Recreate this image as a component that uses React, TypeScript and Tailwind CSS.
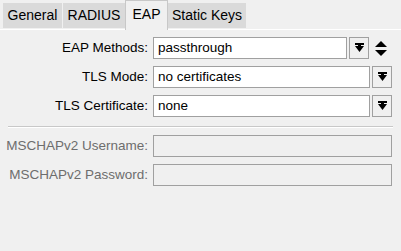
function DropIcon() {
  return (
    <svg width="9" height="10" viewBox="0 0 9 10" aria-hidden>
      <rect x="0" y="0" width="9" height="2" fill="#000" />
      <path d="M0 3 H9 L4.5 9 Z" fill="#000" />
      <rect x="3" y="2" width="3" height="3" fill="#000" />
    </svg>
  );
}

function UpDownIcon() {
  return (
    <svg width="12" height="15" viewBox="0 0 12 15" aria-hidden>
      <path d="M6 0 L12 6 H0 Z" fill="#000" />
      <path d="M0 9 H12 L6 15 Z" fill="#000" />
    </svg>
  );
}

function DropButton() {
  return (
    <div className="w-[20px] h-[22px] shrink-0 border border-[#a0a0a0] bg-[#f0f0f0] flex items-center justify-center">
      <DropIcon />
    </div>
  );
}

function Row({ label, value, extra }: { label: string; value: string; extra?: boolean }) {
  return (
    <div className="flex items-center h-[22px]">
      <div className="w-[148px] shrink-0 text-right pr-[5px] text-[13.5px] text-black">{label}</div>
      <div className="flex-1 h-[22px] bg-white border border-[#a0a0a0] flex items-center px-[4px] text-[13.5px] text-black">
        {value}
      </div>
      <div className="ml-[2px]">
        <DropButton />
      </div>
      {extra && (
        <div className="w-[23px] shrink-0 flex items-center justify-center">
          <UpDownIcon />
        </div>
      )}
    </div>
  );
}

function GreyRow({ label }: { label: string }) {
  return (
    <div className="flex items-center h-[22px]">
      <div className="w-[148px] shrink-0 text-right pr-[5px] text-[13.5px] text-[#6d6d6d]">{label}</div>
      <div className="flex-1 h-[22px] bg-[#f0f0f0] border border-[#a0a0a0]" />
    </div>
  );
}

const tabs = [
  { label: "General", w: "w-[60px]" },
  { label: "RADIUS", w: "w-[63px]" },
  { label: "EAP", w: "w-[43px]" },
  { label: "Static Keys", w: "w-[79px]" },
];

export default function App() {
  return (
    <div className="w-[401px] h-[251px] bg-[#f0f0f0] font-['Liberation_Sans',Arial,sans-serif] overflow-hidden">
      {/* Tab strip */}
      <div className="relative h-[30px] pl-[3px] flex items-end">
        <div className="absolute left-0 right-0 bottom-0 h-px bg-white" />
        {tabs.map((t) => {
          const active = t.label === "EAP";
          return active ? (
            <div
              key={t.label}
              className={`relative z-10 ${t.w} h-[30px] pb-[2px] flex items-center justify-center bg-[#f0f0f0] border-x border-t border-[#c8c8c8] text-[14px] text-black -ml-px`}
            >
              {t.label}
            </div>
          ) : (
            <div
              key={t.label}
              className={`${t.w} h-[25px] mb-[2px] flex items-center justify-center bg-[#dadada] border-r border-[#f0f0f0] text-[14px] text-black`}
            >
              {t.label}
            </div>
          );
        })}
      </div>

      {/* Form */}
      <div className="pl-[5px] pr-[9px] pt-[7px] flex flex-col gap-[7px]">
        <Row label="EAP Methods:" value="passthrough" extra />
        <Row label="TLS Mode:" value="no certificates" />
        <Row label="TLS Certificate:" value="none" />
      </div>

      <div className="mx-[8px] mt-[9px] mb-[7px] h-[2px] border-t border-[#c8c8c8] border-b border-b-white" />

      <div className="pl-[5px] pr-[9px] flex flex-col gap-[7px]">
        <GreyRow label="MSCHAPv2 Username:" />
        <GreyRow label="MSCHAPv2 Password:" />
      </div>
    </div>
  );
}
